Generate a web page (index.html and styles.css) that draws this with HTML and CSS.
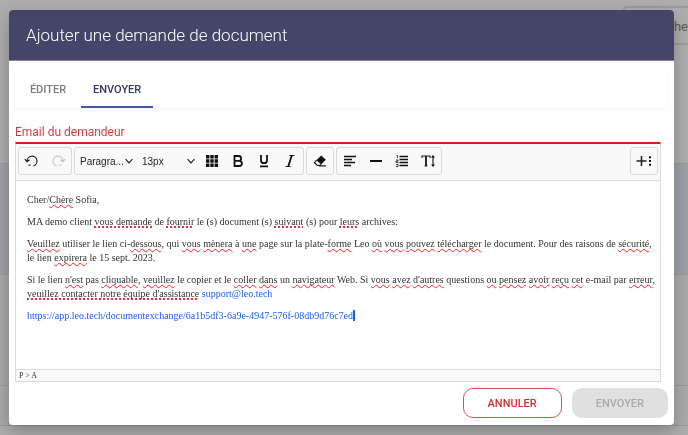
FILE: index.html
```
<!DOCTYPE html>
<html lang="fr">
<head>
  <meta charset="UTF-8">
  <meta name="viewport" content="width=device-width, initial-scale=1.0">
  <title>Ajouter une demande de document</title>
  <link rel="stylesheet" href="styles.css">
</head>
<body>
  <!-- Dimmed page behind the dialog -->
  <div class="page">
    <div class="page-top">
      <div class="page-search">Recherche</div>
    </div>
    <div class="page-band"></div>
    <div class="page-row"></div>
    <div class="page-row page-row-short"></div>
  </div>

  <div class="overlay">
    <div class="dialog" role="dialog" aria-labelledby="dialog-title">
      <header class="dialog-header">
        <h1 id="dialog-title">Ajouter une demande de document</h1>
      </header>

      <nav class="tabs">
        <button type="button" class="tab">ÉDITER</button>
        <button type="button" class="tab active">ENVOYER</button>
      </nav>

      <div class="field">
        <h2 class="field-label" id="email-label">Email du demandeur</h2>

        <div class="editor">
          <div class="toolbar">
            <div class="group">
              <button type="button" class="tool" aria-label="Annuler la frappe">
                <svg viewBox="0 0 16 16"><path d="M4.6 12.2h2M9.4 13A5 5 0 1 0 3 8.2M.8 6.2 3 8.6l2.6-1.8" /></svg>
              </button>
              <button type="button" class="tool" aria-label="Rétablir" disabled>
                <svg viewBox="0 0 16 16"><path d="M9.4 12.2h2M6.6 13A5 5 0 1 1 13 8.2M15.2 6.2 13 8.6l-2.6-1.8" /></svg>
              </button>
            </div>

            <div class="group">
              <span class="picker">
                <select aria-label="Format"><option>Paragra...</option></select>
                <svg viewBox="0 0 8 8"><path d="M.5 2.2 4 5.8l3.5-3.6" /></svg>
              </span>
              <span class="picker">
                <select aria-label="Taille"><option>13px</option></select>
                <svg viewBox="0 0 8 8"><path d="M.5 2.2 4 5.8l3.5-3.6" /></svg>
              </span>
              <button type="button" class="tool" aria-label="Couleur">
                <svg viewBox="0 0 16 16" class="solid"><path d="M2 2h3.4v3.4H2zM6.3 2h3.4v3.4H6.3zM10.6 2H14v3.4h-3.4zM2 6.3h3.4v3.4H2zM6.3 6.3h3.4v3.4H6.3zM10.6 6.3H14v3.4h-3.4zM2 10.6h3.4V14H2zM6.3 10.6h3.4V14H6.3zM10.6 10.6H14V14h-3.4z" /></svg>
              </button>
              <button type="button" class="tool" aria-label="Gras">
                <svg viewBox="0 0 16 16" class="bold"><path d="M4.5 3h4.2a2.4 2.4 0 0 1 0 4.8H4.5zM4.5 7.8h4.8a2.6 2.6 0 0 1 0 5.2H4.5z" /></svg>
              </button>
              <button type="button" class="tool" aria-label="Souligné">
                <svg viewBox="0 0 16 16" class="bold"><path d="M5 2v5.2a3 3 0 0 0 6 0V2M4 13.3h8" /></svg>
              </button>
              <button type="button" class="tool" aria-label="Italique">
                <svg viewBox="0 0 16 16"><path d="M7.5 2.5h5M3.5 13.5h5" /><path class="heavy" d="M9.8 2.5 6.2 13.5" /></svg>
              </button>
            </div>

            <div class="group">
              <button type="button" class="tool" aria-label="Effacer la mise en forme">
                <svg viewBox="0 0 16 16"><path class="fill" d="m9.2 2.6 4.6 4.2-4.6 4.8-4.8-4.4z" /><path d="M4.6 7.2 2.5 9.6l2.8 2.8h2.6l1.3-1M7 12.8h7" /></svg>
              </button>
            </div>

            <div class="group">
              <button type="button" class="tool" aria-label="Aligner à gauche">
                <svg viewBox="0 0 16 16" class="lines"><path d="M2 3.5h12M2 6.5h8M2 9.5h11M2 12.5h7" /></svg>
              </button>
              <button type="button" class="tool" aria-label="Ligne horizontale">
                <svg viewBox="0 0 16 16" class="bold"><path d="M2 8h12" /></svg>
              </button>
              <button type="button" class="tool" aria-label="Liste numérotée">
                <svg viewBox="0 0 16 16" class="lines"><path d="M5.5 3.5H14M5.5 6.5H14M5.5 9.5H14M5.5 12.5H14" /><path class="thin" d="M2.5 2.5h1V5M2 7h2v1.2H2v1.4h2.4M2 11.5h2v2H2" /></svg>
              </button>
              <button type="button" class="tool" aria-label="Hauteur de ligne">
                <svg viewBox="0 0 16 16"><path d="M2 5V3h8v2M4.5 13h3M13 4v8" /><path class="heavy" d="M6 3v10" /><path class="fill" d="m13 2 2 2.5h-4zM13 14l2-2.5h-4z" /></svg>
              </button>
            </div>

            <div class="group group-end">
              <button type="button" class="tool" aria-label="Plus d'options">
                <svg viewBox="0 0 16 16"><path class="plus" d="M.5 8h10M5.5 3v10" /><path class="fill" d="M13 3.2h2v2h-2zM13 7h2v2h-2zM13 10.8h2v2h-2z" /></svg>
              </button>
            </div>
          </div>

          <div class="content" contenteditable="true" role="textbox" aria-multiline="true" aria-labelledby="email-label" spellcheck="false">
            <p>Cher/<u>Chère</u> Sofia,</p>
            <p>MA demo client <u class="dots">vous demande</u> de <u class="dots">fournir</u> le (s) document (s) <u class="dots">suivant</u> (s) pour <u class="dots">leurs</u> archives:</p>
            <p><u>Veuillez</u> utiliser le lien ci-<u>dessous</u>, qui <u>vous</u> <u>mènera</u> à <u>une</u> page sur la plate-<u>forme</u> Leo <u>où</u> <u>vous</u> <u>pouvez</u> <u>télécharger</u> le document. Pour des raisons de <u>sécurité</u>, le lien <u>expirera</u> le 15 sept. 2023.</p>
            <p>Si le lien <u>n'est</u> pas <u>cliquable</u>, <u>veuillez</u> le copier et le <u>coller</u> <u>dans</u> un <u>navigateur</u> Web. Si <u>vous</u> <u>avez</u> <u>d'autres</u> questions <u>ou</u> <u>pensez</u> <u>avoir</u> <u>reçu</u> <u>cet</u> e-mail par <u>erreur</u>, <u class="dots">veuillez contacter notre équipe d'assistance</u> <a href="mailto:support@leo.tech">support@leo.tech</a></p>
            <p><a class="caret" href="https://app.leo.tech/documentexchange/6a1b5df3-6a9e-4947-576f-08db9d76c7ed">https://app.leo.tech/documentexchange/6a1b5df3-6a9e-4947-576f-08db9d76c7ed</a></p>
          </div>

          <div class="status">P &gt; A</div>
        </div>
      </div>

      <footer class="actions">
        <button type="button" class="button button-cancel">ANNULER</button>
        <button type="button" class="button" disabled>ENVOYER</button>
      </footer>
    </div>
  </div>
</body>
</html>
```
FILE: styles.css
```
* {
  box-sizing: border-box;
  margin: 0;
  padding: 0;
}

body {
  font-family: Roboto, sans-serif;
  background-color: #adadad;
  color: #333;
  overflow: hidden;
}

button,
select {
  font-family: inherit;
  border: none;
  background: none;
}

/* page behind */
.page {
  height: 100vh;
  display: flex;
  flex-direction: column;
}

.page-top {
  flex: 0 0 163px;
  padding-top: 6px;
}

.page-search {
  width: 65px;
  height: 39px;
  margin-left: auto;
  border: 2px solid #9c9c9c;
  border-right: none;
  border-radius: 4px 0 0 4px;
  font-size: 13px;
  line-height: 37px;
  text-align: right;
  color: #65574f;
  white-space: nowrap;
}

.page-band {
  flex: 0 0 112px;
  background-color: #9fa0a7;
  border-top: 1px solid #989898;
  border-bottom: 1px solid #989898;
}

.page-row {
  flex: 0 0 111px;
  background-color: #a9a9a9;
  border-bottom: 1px solid #999;
}

.page-row-short {
  flex-basis: 40px;
}

/* dialog */
.overlay {
  position: fixed;
  inset: 0;
  padding: 10px 14px 10px 9px;
}

.dialog {
  height: 100%;
  display: flex;
  flex-direction: column;
  background-color: #fff;
  border-radius: 4px;
  overflow: hidden;
  box-shadow: 0 6px 16px rgba(0, 0, 0, 0.25);
}

.dialog-header {
  padding: 0 17px;
  background-color: #444568;
  border-bottom: 1px solid #8384a0;
}

h1 {
  font-size: 17px;
  font-weight: 300;
  line-height: 50px;
  color: #fff;
}

.tabs {
  display: flex;
  margin: 10px 6px 0;
  box-shadow: 0 1px 3px rgba(0, 0, 0, 0.05);
}

.tab {
  min-width: 66px;
  height: 37px;
  padding: 2px 12px 0;
  font-size: 11px;
  font-weight: 500;
  color: #7d7d7d;
  border-bottom: 2px solid transparent;
}

.tab.active {
  min-width: 71px;
  color: #34375f;
  border-bottom-color: #4356a8;
}

.field {
  flex: 1;
  display: flex;
  flex-direction: column;
  margin: 14px 13px 0 6px;
}

.field-label {
  font-size: 12px;
  font-weight: 400;
  line-height: 20px;
  color: #d53c40;
}

/* editor */
.editor {
  flex: 1;
  display: flex;
  flex-direction: column;
  border: 1px solid #dadada;
  border-top: 2px solid #d01c1c;
}

.toolbar {
  display: flex;
  gap: 2px;
  padding: 3px 2px 5px;
  background-color: #f9f9f9;
  border-bottom: 1px solid #dadada;
}

.group {
  display: flex;
  align-items: center;
  height: 28px;
  border: 1px solid #dadada;
  border-radius: 3px;
}

.group-end {
  margin-left: auto;
}

.tool {
  display: flex;
  align-items: center;
  justify-content: center;
  width: 26px;
  height: 26px;
}

.tool:disabled {
  opacity: 0.25;
}

svg {
  width: 16px;
  height: 16px;
  fill: none;
  stroke: #222;
  stroke-width: 1.2;
}

.solid,
.fill {
  fill: #111;
  stroke: none;
}

.bold,
.heavy {
  stroke: #111;
  stroke-width: 1.8;
}

.plus {
  stroke-width: 1.6;
}

.lines {
  stroke: #111;
  stroke-width: 1.5;
}

.thin {
  stroke-width: 0.8;
}

.picker {
  display: flex;
  align-items: center;
  width: 62px;
  padding: 0 4px 0 5px;
}

.picker select {
  flex: 1;
  min-width: 0;
  appearance: none;
  font-family: "Liberation Sans", Arial, sans-serif;
  font-size: 10px;
  color: #222;
}

.picker svg {
  flex: none;
  width: 8px;
  height: 8px;
}

.content {
  flex: 1;
  padding: 12px 0 0 11px;
  font-family: "Liberation Serif", "Times New Roman", serif;
  font-size: 10px;
  line-height: 14px;
  color: #333;
  outline: none;
}

.content p {
  margin-bottom: 8px;
}

.content a {
  color: #1a62e8;
  text-decoration: none;
}

.content u {
  text-decoration: underline wavy #ff2020 1px;
  text-decoration-skip-ink: none;
}

.content .dots {
  text-decoration: underline dotted #f03030 2px;
}

.content .caret {
  border-right: 2px solid #1a62e8;
}

.status {
  padding: 0 3px;
  font-family: "Liberation Serif", "Times New Roman", serif;
  font-size: 8px;
  line-height: 11px;
  background-color: #f9f9f9;
  border-top: 1px solid #dadada;
}

.actions {
  display: flex;
  justify-content: flex-end;
  gap: 10px;
  padding: 6px 6px 7px;
}

.button {
  height: 30px;
  padding: 0 24px;
  font-size: 11px;
  font-weight: 500;
  border-radius: 10px;
}

.button:disabled {
  color: #aaa;
  background-color: #e0e0e0;
}

.button-cancel {
  color: #d32f2f;
  border: 1px solid #dc5050;
}
```
